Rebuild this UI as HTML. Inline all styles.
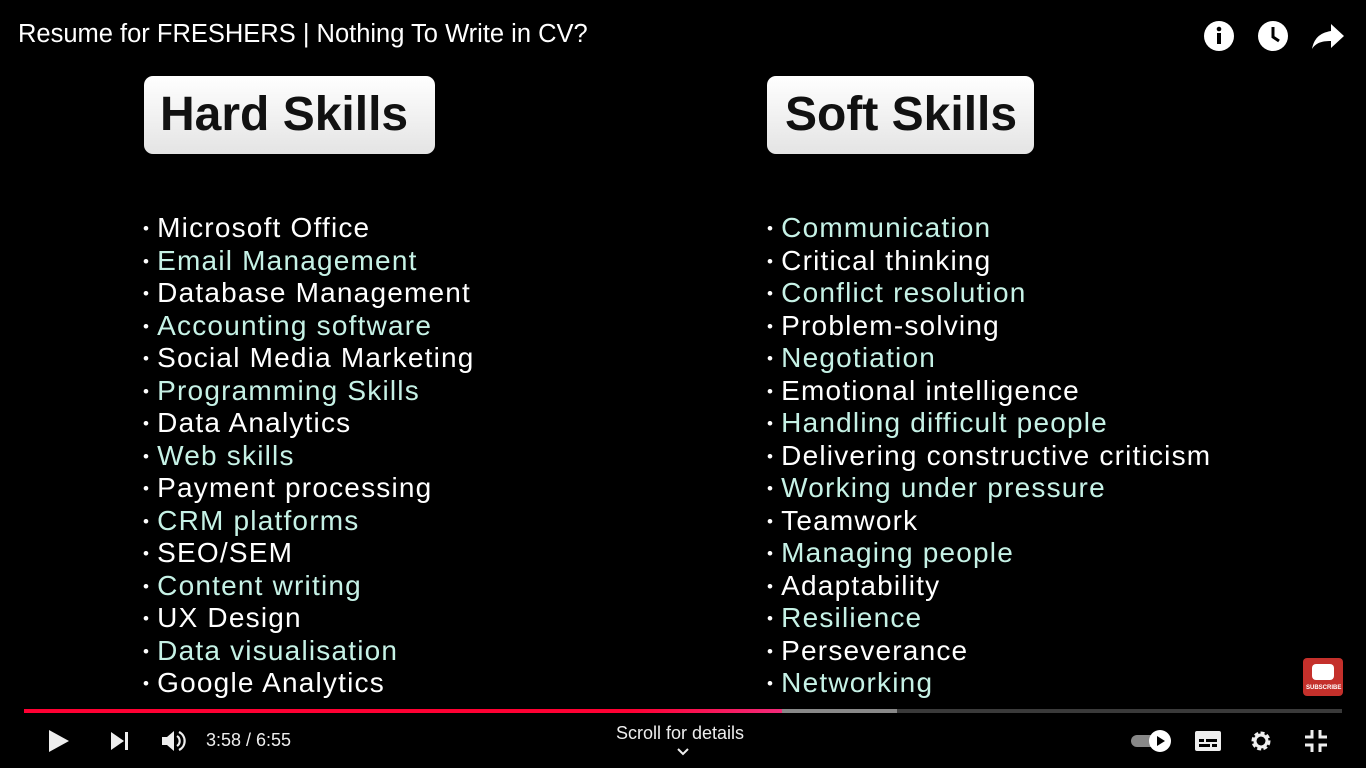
<!DOCTYPE html>
<html><head><style>
*{margin:0;padding:0;box-sizing:border-box}
body{width:1366px;height:768px;background:#000;overflow:hidden;position:relative;font-family:"Liberation Sans",sans-serif;color:#fff}
.title{position:absolute;left:18px;top:20px;font-size:25.5px;color:#fff}
.box{position:absolute;top:76px;height:78px;background:linear-gradient(#fff,#e4e4e4);border-radius:9px;color:#111;font-weight:bold;font-size:48px;line-height:78px;padding-left:16px;letter-spacing:0px}
ul{position:absolute;list-style:none;font-size:28px;letter-spacing:1.2px}
li{height:32.5px;line-height:32.5px;white-space:nowrap}
li:before{content:"•";font-size:17px;margin-right:7px;vertical-align:3px;color:#fff}
.t{color:#c6f2e6}
.ic{position:absolute}
.bar{position:absolute;left:24px;top:709px;height:4px}
.ctrl{position:absolute;top:728px;font-size:18px;color:#eee}
</style></head><body>
<div class="title">Resume for FRESHERS | Nothing To Write in CV?</div>
<svg class="ic" style="left:1203px;top:20px" width="32" height="32" viewBox="0 0 32 32"><circle cx="16" cy="16" r="15" fill="#fff"/><rect x="14" y="13" width="4" height="11" fill="#000"/><circle cx="16" cy="9" r="2.3" fill="#000"/></svg>
<svg class="ic" style="left:1257px;top:20px" width="32" height="32" viewBox="0 0 32 32"><circle cx="16" cy="16" r="15" fill="#fff"/><path d="M16 7v10l6 4" stroke="#000" stroke-width="3" fill="none"/></svg>
<svg class="ic" style="left:1311px;top:22px" width="34" height="28" viewBox="0 0 34 28"><path d="M20 2l13 12-13 12v-7C10 19 5 21 1 27 3 17 8 11 20 9z" fill="#fff"/></svg>
<div class="box" style="left:144px;width:291px">Hard Skills</div>
<div class="box" style="left:767px;width:267px;padding-left:18px">Soft Skills</div>
<ul style="left:143px;top:212px">
<li>Microsoft Office</li><li class="t">Email Management</li><li>Database Management</li><li class="t">Accounting software</li><li>Social Media Marketing</li><li class="t">Programming Skills</li><li>Data Analytics</li><li class="t">Web skills</li><li>Payment processing</li><li class="t">CRM platforms</li><li>SEO/SEM</li><li class="t">Content writing</li><li>UX Design</li><li class="t">Data visualisation</li><li>Google Analytics</li>
</ul>
<ul style="left:767px;top:212px">
<li class="t">Communication</li><li>Critical thinking</li><li class="t">Conflict resolution</li><li>Problem-solving</li><li class="t">Negotiation</li><li>Emotional intelligence</li><li class="t">Handling difficult people</li><li>Delivering constructive criticism</li><li class="t">Working under pressure</li><li>Teamwork</li><li class="t">Managing people</li><li>Adaptability</li><li class="t">Resilience</li><li>Perseverance</li><li class="t">Networking</li>
</ul>
<div style="position:absolute;left:1303px;top:658px;width:40px;height:38px;background:#c4302b;border-radius:4px"><div style="position:absolute;left:9px;top:6px;width:22px;height:16px;background:#fff;border-radius:4px"></div><div style="position:absolute;left:3px;top:27px;font-size:6px;color:#fff;font-weight:bold">SUBSCRIBE</div></div>
<div class="bar" style="width:1318px;background:#3a3a3a"></div>
<div class="bar" style="width:873px;background:#888"></div>
<div class="bar" style="width:758px;background:linear-gradient(90deg,#f03 80%,#f22a7a)"></div>
<svg class="ic" style="left:48px;top:729px" width="22" height="24"><path d="M1 1l20 11L1 23z" fill="#eee"/></svg>
<svg class="ic" style="left:110px;top:731px" width="20" height="20"><path d="M1 1l13 9L1 19z" fill="#eee"/><rect x="15" y="1" width="3" height="18" fill="#eee"/></svg>
<svg class="ic" style="left:161px;top:729px" width="26" height="24"><path d="M1 8h5l7-6v20l-7-6H1z" fill="#eee"/><path d="M16 7a6 6 0 0 1 0 10M18 3a10 10 0 0 1 0 18" stroke="#eee" stroke-width="2.2" fill="none"/></svg>
<div class="ctrl" style="left:206px;top:730px">3:58 / 6:55</div>
<div class="ctrl" style="left:616px;top:723px">Scroll for details</div>
<svg class="ic" style="left:677px;top:748px" width="12" height="8"><path d="M1 1l5 5 5-5" stroke="#eee" stroke-width="2" fill="none"/></svg>
<svg class="ic" style="left:1130px;top:729px" width="44" height="24"><rect x="1" y="6" width="30" height="12" rx="6" fill="#888"/><circle cx="30" cy="12" r="11" fill="#fff"/><path d="M27 7l8 5-8 5z" fill="#000"/></svg>
<svg class="ic" style="left:1194px;top:729px" width="28" height="24"><rect x="1" y="2" width="26" height="20" rx="2" fill="#eee"/><rect x="5" y="10" width="5" height="3" fill="#000"/><rect x="12" y="10" width="11" height="3" fill="#000"/><rect x="5" y="15" width="11" height="3" fill="#000"/><rect x="18" y="15" width="5" height="3" fill="#000"/></svg>
<svg class="ic" style="left:1249px;top:729px" width="24" height="24" viewBox="0 0 24 24"><circle cx="12" cy="12" r="7" fill="none" stroke="#eee" stroke-width="5" stroke-dasharray="3.4 2"/><circle cx="12" cy="12" r="6" fill="none" stroke="#eee" stroke-width="3"/></svg>
<svg class="ic" style="left:1304px;top:729px" width="24" height="24"><path d="M8 1v7H1M16 1v7h7M8 23v-7H1M16 23v-7h7" stroke="#eee" stroke-width="3" fill="none"/></svg>
</body></html>
